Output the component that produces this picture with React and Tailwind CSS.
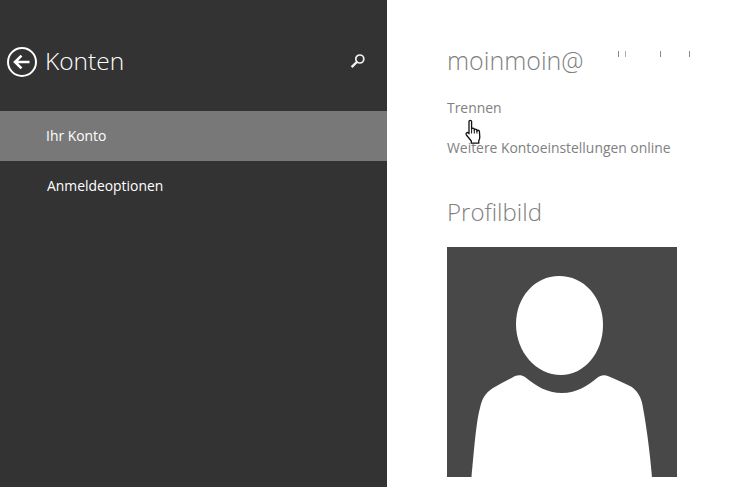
import React from "react";

const HandCursor = () => (
  <svg className="absolute left-[464px] top-[119px]" width="21" height="26" viewBox="0 0 20 26" fill="none">
    <path
      d="M4.500 2.600c0-1.600 2.600-1.600 2.600 0v7.600c.2-1.500 2.500-1.500 2.700 0v1c.2-1.400 2.400-1.400 2.600 0v1c.2-1.300 2.300-1.300 2.500.2l.4 5.600c0 1.400-.3 2.400-1 3.600v2.600H6.800v-2.200L1.900 16c-1.200-1.600.8-3.200 2-2l.6.7V2.600z"
      fill="#fff"
      stroke="#111"
      strokeWidth="1.300"
      strokeLinejoin="round"
    />
    <path d="M7.100 10.500v4M9.800 11v3.500M12.400 12v2.500" stroke="#111" strokeWidth="1" />
  </svg>
);

const BackIcon = () => (
  <svg width="30" height="30" viewBox="0 0 30 30" fill="none" stroke="#fff">
    <circle cx="15" cy="15" r="14" strokeWidth="2" />
    <path d="M8 15h14.500M14.500 8.600 8 15l6.500 6.400" strokeWidth="2.600" />
  </svg>
);

const SearchIcon = () => (
  <svg width="16" height="16" viewBox="0 0 16 16" fill="none" stroke="#f2f2f2">
    <circle cx="9.800" cy="6" r="4" strokeWidth="1.700" />
    <path d="M6.800 9 1.600 14.200" strokeWidth="2.400" />
  </svg>
);

const Avatar = () => (
  <svg className="block" width="230" height="230" viewBox="0 0 230 230">
    <rect width="230" height="230" fill="#484848" />
    <path
      d="M112 29c25 0 44 21 44 49 0 28-19 50-42 50-25 0-45-23-45-51 0-27 19-48 43-48z"
      fill="#fff"
    />
    <path
      d="M24.500 230C27 205 29 175 33 161c2-9 5-15 13-20 7-4 15-8 22-12 4-1.500 7-1 10 1 11 9 22 16 37 16 15 0 25-7 35-15 4-3 7-3.500 12-1.500 8 3 15 7 22 10 6 4 9 9 11 16 4 20 8 50 10 75z"
      fill="#fff"
    />
  </svg>
);

export default function App() {
  return (
    <div className="relative flex h-[487px] w-[736px] overflow-hidden bg-white font-['Open_Sans',sans-serif]">
      <aside className="w-[387px] shrink-0 bg-[#333333] text-white">
        <div className="flex h-[111px] items-start pt-[47px] pl-[7px] pr-[21px]">
          <BackIcon />
          <h1 className="-mt-px ml-2 text-[24.5px] leading-[30px] font-light">Konten</h1>
          <div className="ml-auto pt-[6px]">
            <SearchIcon />
          </div>
        </div>
        <div className="flex h-[50px] items-center bg-[#787878] pl-[46px] text-[13.9px]">Ihr Konto</div>
        <div className="flex h-[50px] items-center pl-[47px] text-[13.9px]">Anmeldeoptionen</div>
      </aside>

      <main className="pl-[60px] pt-[45px] text-[#808080]">
        <div className="flex h-[30px] items-center">
          <h2 className="text-[25px] leading-[30px] font-light">moinmoin@</h2>
          <div className="mb-[13px] ml-[35px] flex items-start">
            <span className="h-[6px] w-px bg-[#888]" />
            <span className="ml-[6px] h-[6px] w-px bg-[#aaa]" />
            <span className="ml-[34px] h-[6px] w-px bg-[#888]" />
            <span className="ml-[28px] h-[6px] w-px bg-[#888]" />
          </div>
        </div>
        <p className="mt-[23px] text-[13.9px] leading-5">Trennen</p>
        <p className="mt-[20px] text-[13.9px] leading-5">Weitere Kontoeinstellungen online</p>
        <h2 className="mt-[39px] text-[24px] leading-[30px] font-light">Profilbild</h2>
        <div className="mt-[20px]">
          <Avatar />
        </div>
      </main>

      <HandCursor />
    </div>
  );
}
